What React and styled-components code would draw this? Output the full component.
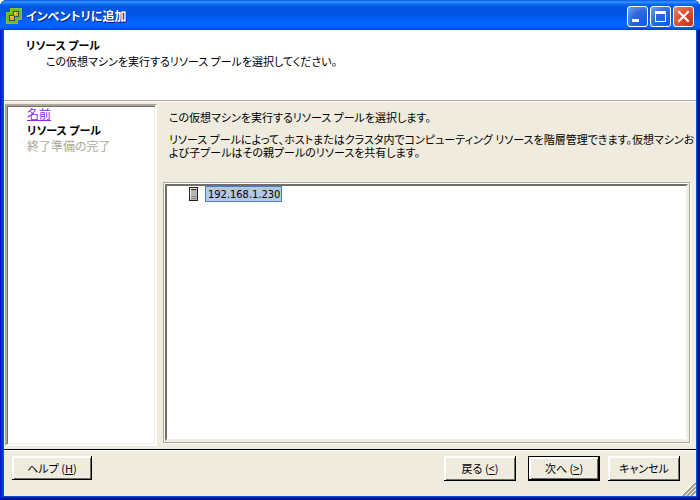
import React from "react"
import styled, { createGlobalStyle } from "styled-components"

const GlobalStyle = createGlobalStyle`
  * {
    box-sizing: border-box;
  }

  body {
    margin: 0;
    background: #fff;
    color: #000;
    font-family: "Noto Sans CJK JP", sans-serif;
    font-size: 11px;
    line-height: 13px;
    font-feature-settings: "palt";
  }

  button {
    font: inherit;
    font-feature-settings: inherit;
    color: inherit;
    padding: 0;
  }

  p, h1, h2, ol {
    margin: 0;
    padding: 0;
  }
`

const Window = styled.div`
  display: flex;
  flex-direction: column;
  min-height: 100vh;
  padding: 0 4px 4px;
  border-radius: 7px 7px 0 0;
  overflow: hidden;
  background: #0a4be4;
  box-shadow: inset 1px 0 #0019cf, inset -2px -2px #00138c, inset 3px 0 #0831d9, inset -3px -3px #001ea0;
`

const TitleBar = styled.header`
  display: flex;
  align-items: center;
  gap: 4px;
  height: 30px;
  margin: 0 -4px;
  padding: 2px 6px 0 6px;
  background: linear-gradient(
    #0058e6 0,
    #3a93ff 2px,
    #0a6cf5 4px,
    #0055e0 7px,
    #0054e3 14px,
    #0062fb 21px,
    #0066ff 26px,
    #005bed 28px,
    #003dd7 30px
  );
`

const Title = styled.h1`
  flex: 1;
  color: #fff;
  font-size: 12px;
  line-height: 16px;
  font-weight: 700;
  text-shadow: 1px 1px #0a1883;
`

const WindowButtons = styled.div`
  display: flex;
  gap: 2px;
`

const WindowButton = styled.button`
  display: flex;
  width: 21px;
  height: 21px;
  border: 1px solid #fff;
  border-radius: 3px;
  background: ${(p) =>
    p.$close
      ? "radial-gradient(circle at 90% 90%, #c8341a 0, #dc5030 55%, #e8836a 100%)"
      : "radial-gradient(circle at 90% 90%, #0f5cf0 0, #2f66dc 55%, #7c9ff0 100%)"};
`

const Banner = styled.section`
  min-height: 70px;
  padding: 7px 22px;
  background: #fff;

  p {
    padding-left: 20px;
    line-height: 16px;
  }
`

const BannerTitle = styled.h2`
  font-size: 11px;
  line-height: 16px;
`

const Body = styled.main`
  display: flex;
  flex: 1;
  gap: 6px;
  padding: 3px 6px 3px 1px;
  background: #efebde;
  border-top: 1px solid #aca899;
  box-shadow: inset 0 1px #fff;
`

const Steps = styled.nav`
  flex: 0 0 152px;
  padding: 0 20px;
  background: #fff;
  border: 2px solid;
  border-color: #aca899 #fff #fff #aca899;
  box-shadow: inset 1px 1px #716f64, inset -1px -1px #f1efe2;

  ol {
    list-style: none;
  }
`

const Step = styled.li`
  font-size: ${(p) => (p.$current ? 11 : 12)}px;
  line-height: 16px;
  font-weight: ${(p) => (p.$current ? 700 : 400)};
  color: ${(p) => (p.$pending ? "#aca899" : "#000")};

  a {
    color: #8a2be2;
  }
`

const Content = styled.section`
  display: flex;
  flex: 1;
  flex-direction: column;
  min-width: 0;
`

const Intro = styled.div`
  display: flex;
  flex-direction: column;
  gap: 9px;
  min-height: 78px;
  margin-right: -6px;
  padding: 7px 0 0 6px;
`

const TreeFrame = styled.div`
  display: flex;
  flex: 1;
  margin-bottom: 3px;
  padding: 1px;
  border: 1px solid #aca899;
  box-shadow: inset 1px 1px #fff, 1px 1px #fff;
`

const Tree = styled.div`
  flex: 1;
  padding: 0 22px;
  background: #fff;
  border: 2px solid;
  border-color: #716f64 #f1efe2 #f1efe2 #716f64;
`

const TreeItem = styled.div`
  display: flex;
  align-items: center;
  gap: 7px;
`

const TreeLabel = styled.button`
  height: 16px;
  padding: 0 1px 0 2px;
  border: 1px solid #4a82bd;
  background: #b5c7e7;
  font-family: "DejaVu Sans Condensed", "DejaVu Sans", sans-serif;
  font-size: 11px;
`

const Footer = styled.footer`
  display: flex;
  align-items: flex-start;
  gap: 8px;
  position: relative;
  min-height: 47px;
  padding: 6px 16px 0 8px;
  background: #efebde;
  border-top: 1px solid #000;
  box-shadow: inset 0 1px #fff;
`

const Button = styled.button`
  width: ${(p) => (p.$wide ? 80 : 72)}px;
  height: ${(p) => (p.$wide ? 24 : 25)}px;
  margin-right: ${(p) => (p.$pushRight ? "auto" : "0")};
  margin-left: ${(p) => (p.$primary ? "4px" : "0")};
  border: ${(p) => (p.$primary ? "1px solid #000" : "0")};
  background: #efebde;
  box-shadow: inset -1px -1px #000, inset 2px 2px #fff, inset -2px -2px #716f64;
`

const Grip = styled.svg`
  position: absolute;
  right: 0;
  bottom: 0;
`

const AppIcon = () => (
  <svg width="16" height="16" viewBox="0 0 16 16" shapeRendering="crispEdges" aria-hidden="true">
    <path d="M4 0h12v12h-4v4H0V4h4z" fill="#8cc028" />
    <path d="M5 1h10v10h-4v4H1V5h4z" fill="#7ab324" />
    <path d="M7 3h6v6H9v4H3V7h4z" fill="#1d5a5a" />
    <path d="M8 4h4v4H8zM4 8h4v4H4z" fill="#f9a01b" />
    <path d="M8 4h2v2H8zM4 8h2v2H4z" fill="#ffc65a" />
  </svg>
)

const HostIcon = () => (
  <svg width="9" height="14" viewBox="0 0 9 14" shapeRendering="crispEdges" aria-hidden="true">
    <rect width="9" height="14" fill="#222" />
    <rect x="1" y="1" width="7" height="12" fill="#b5b5b5" />
    <path d="M1 1h6v1H1zM1 1h1v11H1z" fill="#eee" />
    <path d="M2 2h5v1H2z" fill="#222" />
    <path d="M2 9h5v1H2zM2 11h5v1H2z" fill="#888" />
  </svg>
)

const steps = [
  { label: "名前", done: true },
  { label: "リソース プール", current: true },
  { label: "終了準備の完了", pending: true },
]

export default function App() {
  return (
    <Window>
      <GlobalStyle />
      <TitleBar>
        <AppIcon />
        <Title>インベントリに追加</Title>
        <WindowButtons>
          <WindowButton aria-label="最小化">
            <svg width="19" height="19" viewBox="0 0 19 19">
              <path d="M4 12h7v3H4z" fill="#fff" />
            </svg>
          </WindowButton>
          <WindowButton aria-label="最大化">
            <svg width="19" height="19" viewBox="0 0 19 19">
              <path d="M4 4h11v11H4zM5 7v7h9V7z" fill="#fff" fillRule="evenodd" />
            </svg>
          </WindowButton>
          <WindowButton $close aria-label="閉じる">
            <svg width="19" height="19" viewBox="0 0 19 19">
              <path d="M5 5l9 9M14 5l-9 9" stroke="#fff" strokeWidth="2" strokeLinecap="square" />
            </svg>
          </WindowButton>
        </WindowButtons>
      </TitleBar>

      <Banner>
        <BannerTitle>リソース プール</BannerTitle>
        <p>この仮想マシンを実行するリソース プールを選択してください。</p>
      </Banner>

      <Body>
        <Steps>
          <ol>
            {steps.map((step) => (
              <Step key={step.label} $current={step.current} $pending={step.pending}>
                {step.done ? <a href="#name">{step.label}</a> : step.label}
              </Step>
            ))}
          </ol>
        </Steps>

        <Content>
          <Intro>
            <p>この仮想マシンを実行するリソース プールを選択します。</p>
            <p>
              リソース プールによって、ホストまたはクラスタ内でコンピューティング リソースを階層管理できます。仮想マシンおよび子プールはその親プールのリソースを共有します。
            </p>
          </Intro>
          <TreeFrame>
            <Tree>
              <TreeItem>
                <HostIcon />
                <TreeLabel>192.168.1.230</TreeLabel>
              </TreeItem>
            </Tree>
          </TreeFrame>
        </Content>
      </Body>

      <Footer>
        <Button $wide $pushRight>ヘルプ (<u>H</u>)</Button>
        <Button>戻る (<u>&lt;</u>)</Button>
        <Button $primary>次へ (<u>&gt;</u>)</Button>
        <Button>キャンセル</Button>
        <Grip width="14" height="14" viewBox="0 0 14 14" aria-hidden="true">
          <path d="M1 14L14 1M5 14l9-9M9 14l5-5" stroke="#9d9985" strokeWidth="2" />
          <path d="M0 13L13 0M4 13l10-10M8 13l6-6" stroke="#fff" />
        </Grip>
      </Footer>
    </Window>
  )
}
